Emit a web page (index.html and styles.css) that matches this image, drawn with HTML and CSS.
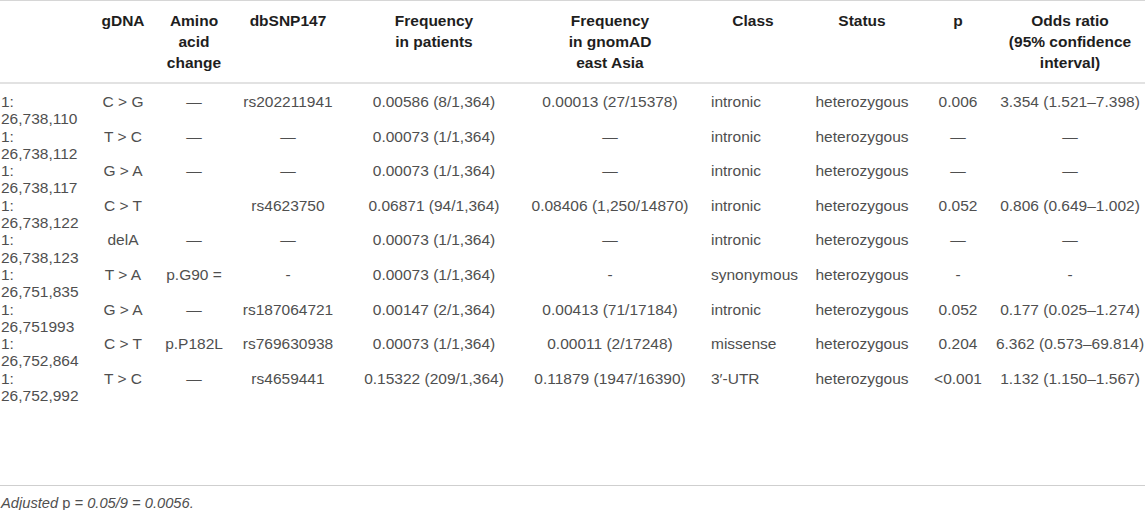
FILE: index.html
```html
<!DOCTYPE html>
<html>
<head>
<meta charset="utf-8">
<link rel="stylesheet" href="styles.css">
</head>
<body>
<table class="vt">
  <colgroup>
    <col class="c-pos"><col class="c-gdna"><col class="c-aa"><col class="c-snp"><col class="c-fp"><col class="c-fg"><col class="c-class"><col class="c-status"><col class="c-p"><col class="c-or">
  </colgroup>
  <thead>
    <tr>
      <th class="left"></th>
      <th>gDNA</th>
      <th>Amino<br>acid<br>change</th>
      <th>dbSNP147</th>
      <th>Frequency<br>in patients</th>
      <th>Frequency<br>in gnomAD<br>east Asia</th>
      <th>Class</th>
      <th>Status</th>
      <th class="pc">p</th>
      <th>Odds ratio<br>(95% confidence<br>interval)</th>
    </tr>
  </thead>
  <tbody>
    <tr>
      <td class="left">1:<br>26,738,110</td><td>C &gt; G</td><td>—</td><td>rs202211941</td><td>0.00586 (8/1,364)</td><td>0.00013 (27/15378)</td><td class="cls">intronic</td><td>heterozygous</td><td class="pc">0.006</td><td>3.354 (1.521–7.398)</td>
    </tr>
    <tr>
      <td class="left">1:<br>26,738,112</td><td>T &gt; C</td><td>—</td><td>—</td><td>0.00073 (1/1,364)</td><td>—</td><td class="cls">intronic</td><td>heterozygous</td><td class="pc">—</td><td>—</td>
    </tr>
    <tr>
      <td class="left">1:<br>26,738,117</td><td>G &gt; A</td><td>—</td><td>—</td><td>0.00073 (1/1,364)</td><td>—</td><td class="cls">intronic</td><td>heterozygous</td><td class="pc">—</td><td>—</td>
    </tr>
    <tr>
      <td class="left">1:<br>26,738,122</td><td>C &gt; T</td><td></td><td>rs4623750</td><td>0.06871 (94/1,364)</td><td>0.08406 (1,250/14870)</td><td class="cls">intronic</td><td>heterozygous</td><td class="pc">0.052</td><td>0.806 (0.649–1.002)</td>
    </tr>
    <tr>
      <td class="left">1:<br>26,738,123</td><td>delA</td><td>—</td><td>—</td><td>0.00073 (1/1,364)</td><td>—</td><td class="cls">intronic</td><td>heterozygous</td><td class="pc">—</td><td>—</td>
    </tr>
    <tr>
      <td class="left">1:<br>26,751,835</td><td>T &gt; A</td><td>p.G90 =</td><td>-</td><td>0.00073 (1/1,364)</td><td>-</td><td class="cls">synonymous</td><td>heterozygous</td><td class="pc">-</td><td>-</td>
    </tr>
    <tr>
      <td class="left">1:<br>26,751993</td><td>G &gt; A</td><td>—</td><td>rs187064721</td><td>0.00147 (2/1,364)</td><td>0.00413 (71/17184)</td><td class="cls">intronic</td><td>heterozygous</td><td class="pc">0.052</td><td>0.177 (0.025–1.274)</td>
    </tr>
    <tr>
      <td class="left">1:<br>26,752,864</td><td>C &gt; T</td><td>p.P182L</td><td>rs769630938</td><td>0.00073 (1/1,364)</td><td>0.00011 (2/17248)</td><td class="cls">missense</td><td>heterozygous</td><td class="pc">0.204</td><td>6.362 (0.573–69.814)</td>
    </tr>
    <tr class="last">
      <td class="left">1:<br>26,752,992</td><td>T &gt; C</td><td>—</td><td>rs4659441</td><td>0.15322 (209/1,364)</td><td>0.11879 (1947/16390)</td><td class="cls">3′-UTR</td><td>heterozygous</td><td class="pc">&lt;0.001</td><td>1.132 (1.150–1.567)</td>
    </tr>
  </tbody>
</table>
<p class="note"><em>Adjusted</em> p <em>= 0.05/9 = 0.0056.</em></p>
</body>
</html>
```
FILE: styles.css
```css
html, body {
  margin: 0;
  padding: 0;
  background: #ffffff;
}
body {
  font-family: "Liberation Sans", Arial, Helvetica, sans-serif;
  color: #4f4f4f;
}
.vt {
  width: 1145px;
  table-layout: fixed;
  border-collapse: collapse;
  font-size: 15.5px;
  border-top: 1px solid #d6d6d6;
  border-bottom: 1px solid #cfcfcf;
}
.c-pos { width: 95px; }
.c-gdna { width: 56px; }
.c-aa { width: 86px; }
.c-snp { width: 102px; }
.c-fp { width: 190px; }
.c-fg { width: 162px; }
.c-class { width: 124px; }
.c-status { width: 94px; }
.c-p { width: 86px; }
.c-or { width: 150px; }
.vt th {
  font-weight: bold;
  color: #1e1e1e;
  line-height: 21px;
  padding: 9px 0 9px 0;
  text-align: center;
  vertical-align: top;
  white-space: nowrap;
  border-bottom: 2px solid #e2e2e2;
}
.vt td {
  line-height: 17.3px;
  padding: 0;
  text-align: center;
  vertical-align: top;
  white-space: nowrap;
}
.vt tbody tr:first-child td {
  padding-top: 9px;
}
.vt tbody tr.last td {
  padding-bottom: 81px;
}
.vt .left {
  text-align: left;
  padding-left: 1px;
}
.vt td.cls {
  text-align: left;
  padding-left: 20px;
}
.vt .pc {
  padding-left: 12px;
}
.note {
  margin: 9px 0 0 0;
  padding-left: 1px;
  font-size: 14.7px;
  line-height: 17px;
  color: #4f4f4f;
}
.note em {
  font-style: italic;
}
```
